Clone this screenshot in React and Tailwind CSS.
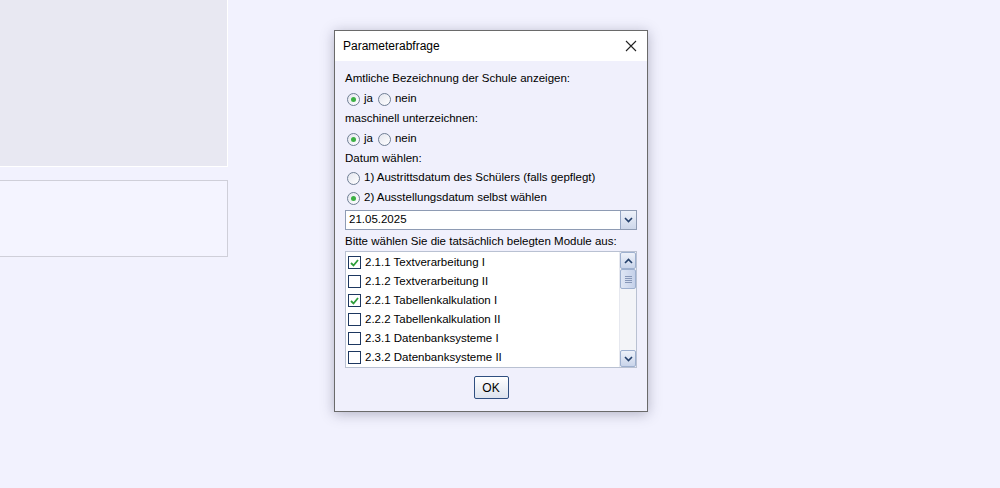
const font = { fontFamily: '"Liberation Sans", Arial, sans-serif' };

const Radio = ({ checked }) => (
  <span className="relative inline-flex h-[13px] w-[13px] shrink-0 items-center justify-center rounded-full border border-[#6f7e94] bg-gradient-to-br from-[#e4e6ee] to-white">
    {checked && <span className="h-[5px] w-[5px] rounded-full bg-[#3cb043]" />}
  </span>
);

const Check = ({ checked }) => (
  <span className="inline-flex h-[13px] w-[13px] shrink-0 items-center justify-center border border-[#1d3760] bg-white">
    {checked && (
      <svg width="9" height="8" viewBox="0 0 9 8">
        <path d="M1 4 L3.5 6.5 L8 1" fill="none" stroke="#2e9e3a" strokeWidth="1.8" />
      </svg>
    )}
  </span>
);

const Chevron = ({ up }) => (
  <svg width="9" height="6" viewBox="0 0 9 6">
    <path d={up ? 'M1 5 L4.5 1.5 L8 5' : 'M1 1 L4.5 4.5 L8 1'} fill="none" stroke="#24406b" strokeWidth="1.6" />
  </svg>
);

const modules = [
  { label: '2.1.1 Textverarbeitung I', checked: true },
  { label: '2.1.2 Textverarbeitung II', checked: false },
  { label: '2.2.1 Tabellenkalkulation I', checked: true },
  { label: '2.2.2 Tabellenkalkulation II', checked: false },
  { label: '2.3.1 Datenbanksysteme I', checked: false },
  { label: '2.3.2 Datenbanksysteme II', checked: false },
];

export default function App() {
  return (
    <div className="relative h-[488px] w-[1000px] overflow-hidden bg-[#f2f2fe]" style={font}>
      <div className="flex w-[228px] flex-col">
        <div className="h-[167px] border-b border-r border-white bg-[#e8e8f2]" />
        <div className="mt-[13px] h-[77px] border-y border-r border-[#cfcfd9] bg-[#f4f4ff]" />
      </div>

      <div className="absolute left-[334px] top-[30px] flex h-[382px] w-[314px] flex-col border border-[#6a6a6a] bg-[#f0f0fc] shadow-[0_2px_12px_rgba(60,60,90,0.35)]">
        <div className="flex h-[30px] items-center justify-between bg-white pl-[8px] pr-[10px] text-[12px] text-black">
          <span>Parameterabfrage</span>
          <svg width="12" height="12" viewBox="0 0 12 12">
            <path d="M1 1 L11 11 M11 1 L1 11" stroke="#222" strokeWidth="1.1" />
          </svg>
        </div>

        <div className="flex flex-1 flex-col px-[10px] pt-[8px] text-[11.5px] text-black">
          <div className="flex h-[20px] items-center">Amtliche Bezeichnung der Schule anzeigen:</div>
          <div className="flex h-[20px] items-center gap-[4px] pl-[2px]">
            <Radio checked />
            <span className="mr-[1px]">ja</span>
            <Radio />
            <span>nein</span>
          </div>
          <div className="flex h-[20px] items-center">maschinell unterzeichnen:</div>
          <div className="flex h-[20px] items-center gap-[4px] pl-[2px]">
            <Radio checked />
            <span className="mr-[1px]">ja</span>
            <Radio />
            <span>nein</span>
          </div>
          <div className="flex h-[19px] items-center">Datum wählen:</div>
          <div className="flex h-[20px] items-center gap-[4px] pl-[2px]">
            <Radio />
            <span>1) Austrittsdatum des Schülers (falls gepflegt)</span>
          </div>
          <div className="flex h-[20px] items-center gap-[4px] pl-[2px]">
            <Radio checked />
            <span>2) Ausstellungsdatum selbst wählen</span>
          </div>

          <div className="mt-[2px] flex h-[20px] border border-[#8e9bb3] bg-white">
            <div className="flex flex-1 items-center pl-[3px]">21.05.2025</div>
            <div className="flex w-[16px] items-center justify-center border-l border-[#95a6c4] bg-gradient-to-b from-[#eef2fa] to-[#cdd7ea]">
              <Chevron />
            </div>
          </div>

          <div className="flex h-[21px] items-center pt-[2px]">Bitte wählen Sie die tatsächlich belegten Module aus:</div>

          <div className="flex h-[117px] border border-[#b9c1d2] bg-white">
            <div className="flex flex-1 flex-col pl-[2px] pt-[1px]">
              {modules.map((m) => (
                <div key={m.label} className="flex h-[19px] items-center gap-[4px]">
                  <Check checked={m.checked} />
                  <span>{m.label}</span>
                </div>
              ))}
            </div>
            <div className="flex w-[17px] flex-col border-l border-[#e6e8ef] bg-[#f3f4f8]">
              <div className="flex h-[17px] items-center justify-center rounded-[2px] border border-[#9eb0cf] bg-gradient-to-b from-[#eef2fa] to-[#c9d4ea]">
                <Chevron up />
              </div>
              <div className="flex h-[20px] flex-col items-center justify-center gap-[1px] rounded-[2px] border border-[#9eb0cf] bg-gradient-to-r from-[#dfe6f4] to-[#c5d1ea]">
                <span className="h-px w-[7px] bg-[#8797b8]" />
                <span className="h-px w-[7px] bg-[#8797b8]" />
                <span className="h-px w-[7px] bg-[#8797b8]" />
                <span className="h-px w-[7px] bg-[#8797b8]" />
              </div>
              <div className="flex-1" />
              <div className="flex h-[17px] items-center justify-center rounded-[2px] border border-[#9eb0cf] bg-gradient-to-b from-[#eef2fa] to-[#c9d4ea]">
                <Chevron />
              </div>
            </div>
          </div>

          <div className="flex justify-center pt-[8px]">
            <button className="flex h-[23px] w-[35px] items-center justify-center rounded-[2px] border border-[#2f4f80] bg-gradient-to-b from-white to-[#dde3ee] text-[12px] text-black">
              OK
            </button>
          </div>
        </div>
      </div>
    </div>
  );
}
